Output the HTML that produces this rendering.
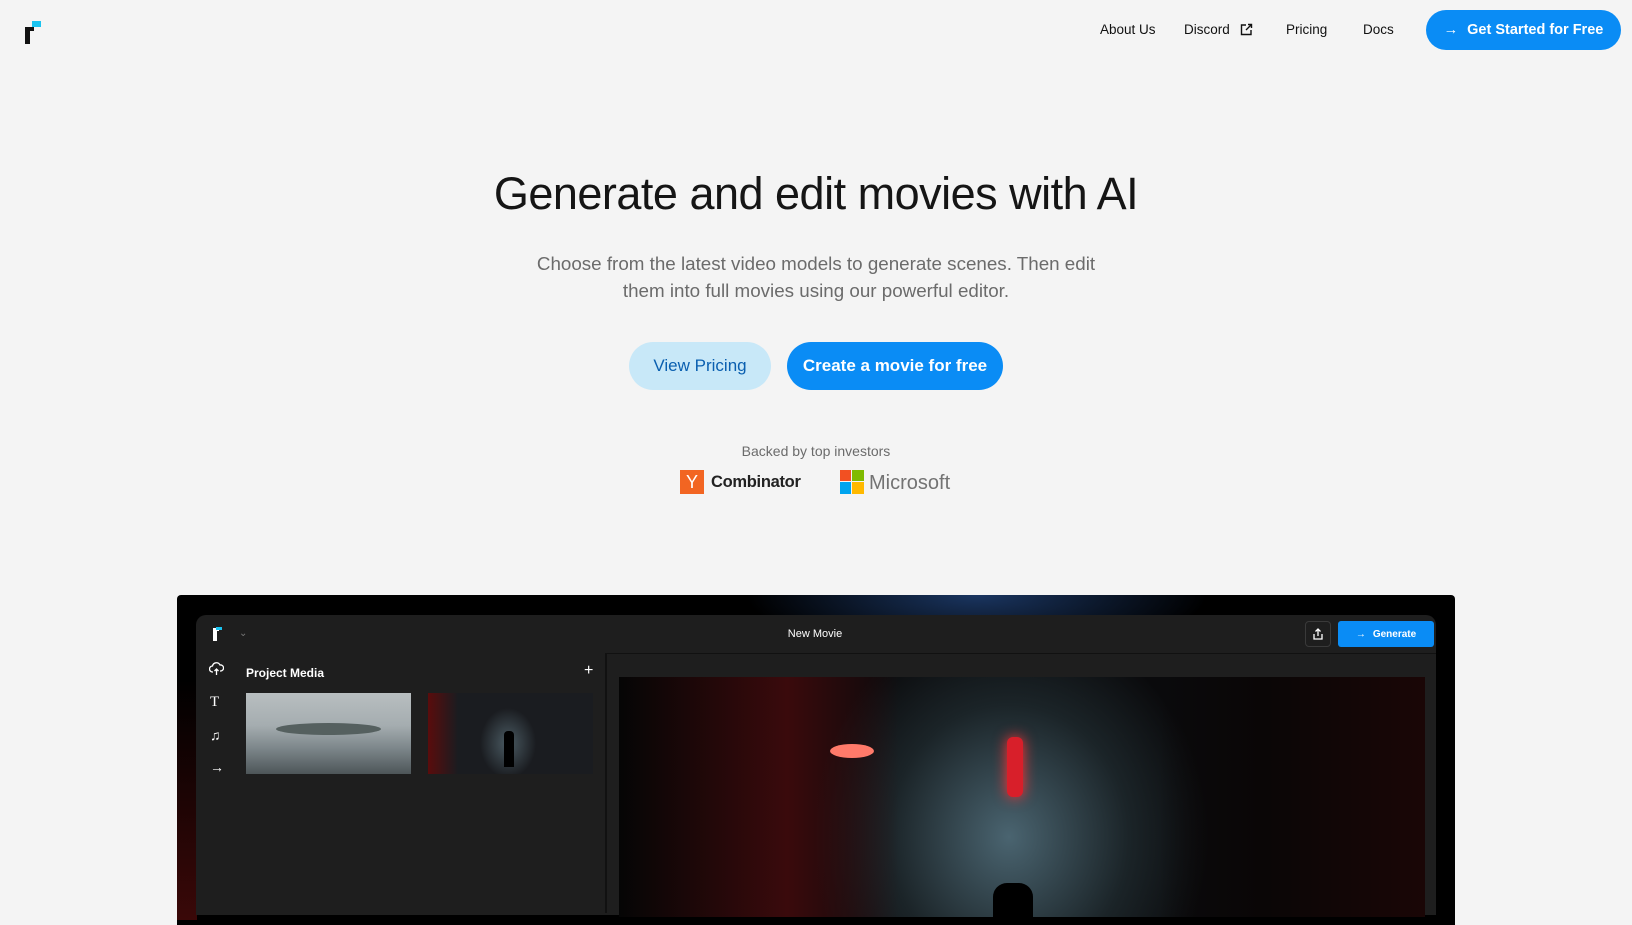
<!DOCTYPE html>
<html><head><meta charset="utf-8"><style>
*{margin:0;padding:0;box-sizing:border-box}
body{width:1632px;height:912px;overflow:hidden;background:#f4f4f4;font-family:"Liberation Sans",sans-serif;position:relative;color:#111}
.a{position:absolute}
.nav{font-size:13.5px;color:#111;top:22px}
.btn{position:absolute;border-radius:26px;font-size:17px;display:flex;align-items:center;justify-content:center}
</style></head><body>
<div class="a" style="left:25px;top:27px;width:5px;height:17px;background:#111"></div>
<div class="a" style="left:25px;top:27px;width:9px;height:4px;background:#111"></div>
<div class="a" style="left:32px;top:21px;width:9px;height:6px;background:#19c3f0"></div>

<div class="a nav" style="left:1100px">About Us</div>
<div class="a nav" style="left:1184px">Discord</div>
<svg class="a" style="left:1240px;top:23px" width="13" height="13" viewBox="0 0 13 13" fill="none" stroke="#111" stroke-width="1.4"><path d="M6 2H1.5v9.5H11V7"/><path d="M8 1.5h3.5V5M11.5 1.5 6 7"/></svg>
<div class="a nav" style="left:1286px">Pricing</div>
<div class="a nav" style="left:1363px">Docs</div>
<div class="btn" style="left:1426px;top:10px;width:195px;height:40px;background:#0a8cf5;color:#fff;font-size:14.5px;font-weight:bold">
<span style="font-weight:normal;margin-right:9px">→</span>Get Started for Free</div>

<div class="a" style="left:0;width:1632px;top:168px;text-align:center;font-size:45px;color:#151515;letter-spacing:-0.5px">Generate and edit movies with AI</div>
<div class="a" style="left:0;width:1632px;top:250px;text-align:center;font-size:18.8px;line-height:27px;color:#6b6b6b">Choose from the latest video models to generate scenes. Then edit<br>them into full movies using our powerful editor.</div>
<div class="btn" style="left:629px;top:342px;width:142px;height:48px;background:#c8e8f8;color:#0a5fb0">View Pricing</div>
<div class="btn" style="left:787px;top:342px;width:216px;height:48px;background:#0a8cf5;color:#fff;font-weight:bold">Create a movie for free</div>

<div class="a" style="left:0;width:1632px;top:443px;text-align:center;font-size:14px;color:#6b6b6b">Backed by top investors</div>
<div class="a" style="left:680px;top:470px;width:24px;height:24px;background:#f26522;color:#fff;font-size:18px;text-align:center;line-height:24px">Y</div>
<div class="a" style="left:711px;top:473px;font-size:16.5px;font-weight:bold;color:#222;letter-spacing:-0.3px">Combinator</div>
<div class="a" style="left:840px;top:470px;width:11px;height:11px;background:#f25022"></div>
<div class="a" style="left:852px;top:470px;width:12px;height:11px;background:#7fba00"></div>
<div class="a" style="left:840px;top:482px;width:11px;height:12px;background:#00a4ef"></div>
<div class="a" style="left:852px;top:482px;width:12px;height:12px;background:#ffb900"></div>
<div class="a" style="left:869px;top:472px;font-size:20px;color:#737373">Microsoft</div>

<div class="a" style="left:177px;top:595px;width:1278px;height:330px;background:radial-gradient(ellipse 230px 60px at 800px 0,#1a3560,#000 100%);border-radius:4px 4px 0 0"></div>
<div class="a" style="left:177px;top:680px;width:20px;height:240px;background:linear-gradient(180deg,#000,#3a0808)"></div>
<div class="a" style="left:196px;top:615px;width:1240px;height:300px;background:#1e1e1e;border-radius:10px 10px 0 0"></div>
<div class="a" style="left:213px;top:629px;width:4px;height:12px;background:#fff"></div>
<div class="a" style="left:213px;top:628px;width:6px;height:3px;background:#fff"></div>
<div class="a" style="left:216px;top:627px;width:6px;height:3px;background:#19c3f0"></div>
<div class="a" style="left:239px;top:628px;color:#777;font-size:10px">⌄</div>
<div class="a" style="left:0;width:1630px;top:628px;text-align:center;font-size:11px;color:#fff">New Movie</div>
<div class="a" style="left:1305px;top:621px;width:26px;height:26px;border:1px solid #3a3a3a;border-radius:4px"></div>
<svg class="a" style="left:1311px;top:627px" width="14" height="14" viewBox="0 0 14 14" fill="none" stroke="#fff" stroke-width="1.3"><path d="M7 9V2M4.5 4.5 7 2l2.5 2.5M3 7v5h8V7"/></svg>
<div class="a" style="left:1338px;top:621px;width:96px;height:26px;background:#0a8cf5;border-radius:3px;color:#fff;font-size:10px;font-weight:bold;display:flex;align-items:center;justify-content:center"><span style="font-weight:normal;margin-right:7px">→</span>Generate</div>
<div class="a" style="left:605px;top:653px;width:831px;height:1px;background:#111"></div>
<div class="a" style="left:605px;top:653px;width:2px;height:260px;background:#111"></div>

<svg class="a" style="left:209px;top:662px" width="15" height="14" viewBox="0 0 15 14" fill="none" stroke="#fff" stroke-width="1.3"><path d="M4 10H3.5a3 3 0 0 1 0-6 4 4 0 0 1 7.5-1 3 3 0 0 1 1 6H11M7.5 13V7M5.5 9l2-2 2 2"/></svg>
<div class="a" style="left:210px;top:694px;color:#fff;font-size:15px;font-family:'Liberation Serif',serif">T</div>
<div class="a" style="left:210px;top:727px;color:#fff;font-size:14px">♫</div>
<div class="a" style="left:210px;top:759px;color:#fff;font-size:14px">→</div>
<div class="a" style="left:246px;top:666px;color:#fff;font-size:12px;font-weight:bold">Project Media</div>
<div class="a" style="left:584px;top:662px;color:#fff;font-size:16px">+</div>
<div class="a" style="left:246px;top:693px;width:165px;height:81px;background:linear-gradient(180deg,#b8bec0 0%,#a5adb0 40%,#7a8488 70%,#4d5558 100%)">
<div class="a" style="left:30px;top:30px;width:105px;height:12px;border-radius:50%;background:#55605f"></div></div>
<div class="a" style="left:428px;top:693px;width:165px;height:81px;background:radial-gradient(ellipse 40px 50px at 80px 50px,#4a5a62,#1a1c20 70%),#111">
<div class="a" style="left:0;top:0;width:30px;height:81px;background:linear-gradient(90deg,#5a0c0c,transparent)"></div>
<div class="a" style="left:76px;top:38px;width:10px;height:36px;background:#000;border-radius:4px 4px 0 0"></div></div>

<div class="a" style="left:619px;top:677px;width:806px;height:240px;background:radial-gradient(ellipse 200px 220px at 390px 160px,#4a6470,#1b2428 60%,#0a0a0c 100%)">
<div class="a" style="left:0;top:0;width:280px;height:240px;background:linear-gradient(90deg,#050505,#3a0a0c 60%,rgba(40,8,8,0))"></div>
<div class="a" style="left:540px;top:0;width:266px;height:240px;background:linear-gradient(90deg,rgba(10,10,10,0),#0a0606 40%,#1a0606)"></div>
<div class="a" style="left:211px;top:67px;width:44px;height:14px;border-radius:50%;background:#ff7a6a"></div>
<div class="a" style="left:388px;top:60px;width:16px;height:60px;border-radius:6px;background:#d81f2a;box-shadow:0 0 14px #f33"></div>
<div class="a" style="left:374px;top:206px;width:40px;height:34px;background:#000;border-radius:14px 14px 0 0"></div>
</div>
</body></html>
